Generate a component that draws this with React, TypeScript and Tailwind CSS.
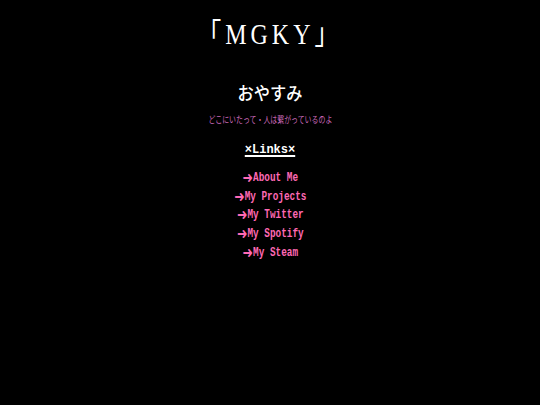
const links = ['About Me', 'My Projects', 'My Twitter', 'My Spotify', 'My Steam'];

export default function App() {
  return (
    <div className="w-[540px] h-[405px] bg-black flex flex-col items-center text-white overflow-hidden">
      <h1 className="mt-[15px] text-[30px] leading-[38px] tracking-[5px] scale-x-[0.8] font-['Liberation_Serif','Noto_Sans_CJK_JP',serif]">
        「MGKY」
      </h1>
      <h2 className="mt-[27px] text-[18px] leading-[24px] font-medium scale-x-[0.9] font-['Noto_Sans_CJK_JP',sans-serif]">
        おやすみ
      </h2>
      <p className="mt-[10px] text-[9px] leading-[12px] text-[#c868b8] scale-x-[0.77] font-['Noto_Sans_CJK_JP',sans-serif]">
        どこにいたって・人は繋がっているのよ
      </p>
      <div className="mt-[16px] text-[12px] leading-[16px] font-bold underline decoration-[1.5px] underline-offset-2 font-['Liberation_Mono',monospace]">
        ×Links×
      </div>
      <ul className="mt-[12px] flex flex-col items-center gap-[3px] scale-x-[0.78] font-['Liberation_Mono',monospace] text-[12px] font-bold text-[#ff69b4]">
        {links.map((l) => (
          <li key={l} className="h-[15.7px] flex items-center">
            <span className="font-['DejaVu_Sans',sans-serif] text-[16px] leading-none">➜</span>
            <a href="#">{l}</a>
          </li>
        ))}
      </ul>
    </div>
  );
}
